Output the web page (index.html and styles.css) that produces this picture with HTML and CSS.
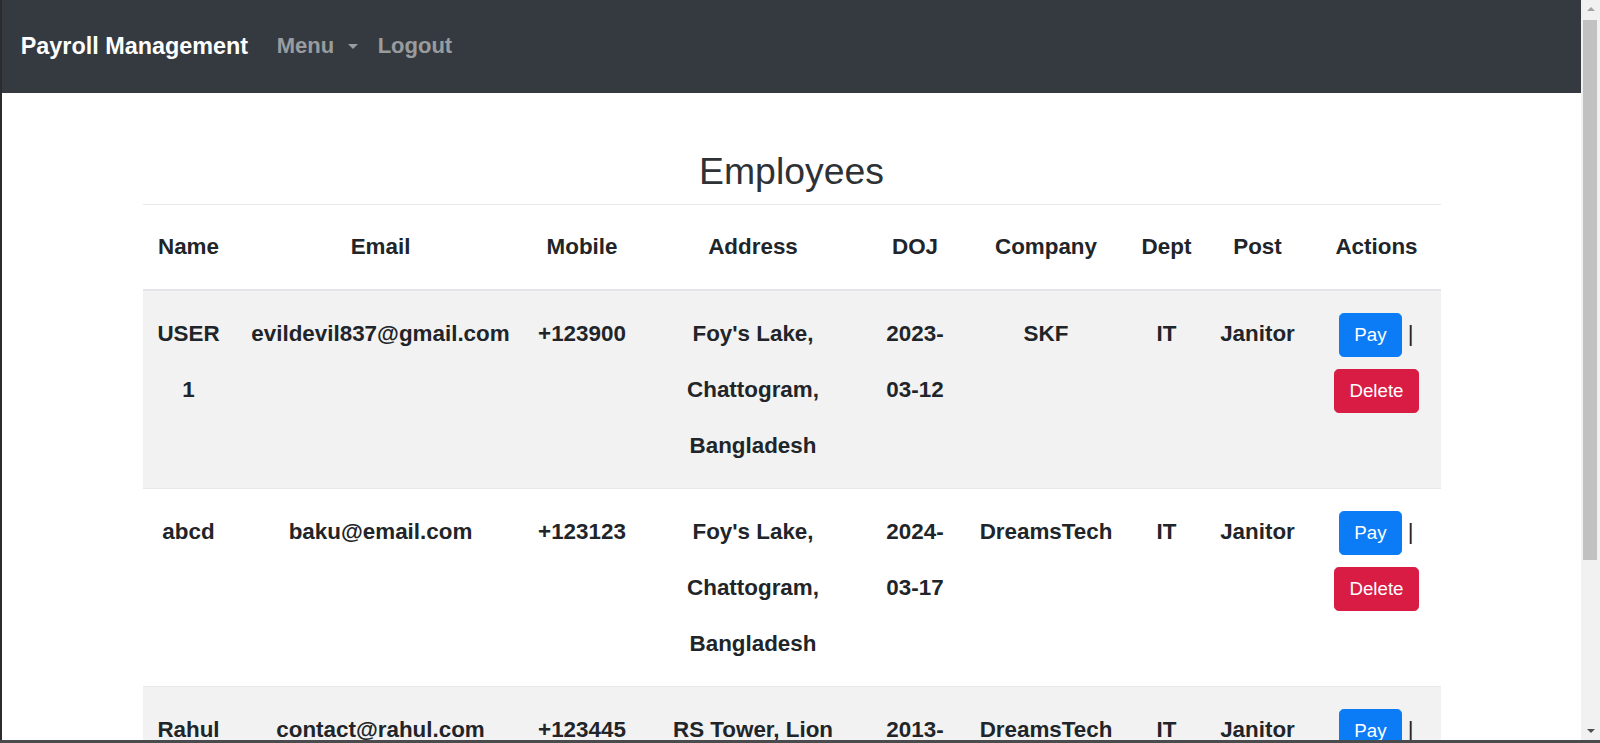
FILE: index.html
```html
<!DOCTYPE html>
<html lang="en">
<head>
<meta charset="utf-8">
<title>Payroll Management</title>
<link rel="stylesheet" href="styles.css">
</head>
<body>
<div class="window">
  <div class="viewport">
    <div class="page">
      <nav class="navbar">
        <a class="brand" href="#">Payroll Management</a>
        <ul class="nav-links">
          <li><a class="nav-link" href="#">Menu<span class="caret"></span></a></li>
          <li class="nav-item-logout"><a class="nav-link" href="#">Logout</a></li>
        </ul>
      </nav>
      <main class="container">
        <h2 class="title">Employees</h2>
        <table class="emp-table">
          <colgroup>
            <col class="c-name"><col class="c-email"><col class="c-mobile"><col class="c-address"><col class="c-doj"><col class="c-company"><col class="c-dept"><col class="c-post"><col class="c-actions">
          </colgroup>
          <thead>
            <tr>
              <th>Name</th><th>Email</th><th>Mobile</th><th>Address</th><th>DOJ</th><th>Company</th><th>Dept</th><th>Post</th><th>Actions</th>
            </tr>
          </thead>
          <tbody>
            <tr>
              <td>USER 1</td>
              <td>evildevil837@gmail.com</td>
              <td class="nowrap">+123900</td>
              <td>Foy's Lake, Chattogram, Bangladesh</td>
              <td>2023-<wbr>03-12</td>
              <td>SKF</td>
              <td>IT</td>
              <td>Janitor</td>
              <td><button class="btn btn-pay">Pay</button> <span class="sep">|</span> <button class="btn btn-delete">Delete</button></td>
            </tr>
            <tr>
              <td>abcd</td>
              <td>baku@email.com</td>
              <td class="nowrap">+123123</td>
              <td>Foy's Lake, Chattogram, Bangladesh</td>
              <td>2024-<wbr>03-17</td>
              <td>DreamsTech</td>
              <td>IT</td>
              <td>Janitor</td>
              <td><button class="btn btn-pay">Pay</button> <span class="sep">|</span> <button class="btn btn-delete">Delete</button></td>
            </tr>
            <tr>
              <td>Rahul</td>
              <td>contact@rahul.com</td>
              <td class="nowrap">+123445</td>
              <td>RS Tower, Lion Street, Chattogram</td>
              <td>2013-<wbr>05-21</td>
              <td>DreamsTech</td>
              <td>IT</td>
              <td>Janitor</td>
              <td><button class="btn btn-pay">Pay</button> <span class="sep">|</span> <button class="btn btn-delete">Delete</button></td>
            </tr>
          </tbody>
        </table>
      </main>
    </div>
    <div class="scrollbar">
      <div class="sb-btn sb-up"><span class="tri-up"></span></div>
      <div class="sb-thumb"></div>
      <div class="sb-track"></div>
      <div class="sb-btn sb-down"><span class="tri-down"></span></div>
    </div>
  </div>
  <div class="frame-bottom"></div>
</div>
</body>
</html>
```

FILE: styles.css
```css
html, body {
  margin: 0;
  padding: 0;
  height: 743px;
  overflow: hidden;
  background: #fff;
  font-family: "Liberation Sans", Arial, sans-serif;
  color: #212529;
}

.window {
  height: 743px;
  display: flex;
  flex-direction: column;
}

.viewport {
  flex: 1;
  min-height: 0;
  display: flex;
  border-left: 2px solid #2c2c2e;
}

.page {
  flex: 1;
  min-width: 0;
  overflow: hidden;
  background: #fff;
}

.frame-bottom {
  height: 3px;
  background: #4a4b4d;
}

/* Navbar */
.navbar {
  height: 93px;
  box-sizing: border-box;
  background: #343a40;
  display: flex;
  align-items: center;
  padding: 0 18.7px 1px;
}

.brand {
  font-size: 23.4px;
  font-weight: 700;
  color: #fff;
  text-decoration: none;
  margin-right: 28.5px;
  white-space: nowrap;
}

.nav-links {
  display: flex;
  align-items: center;
  list-style: none;
  margin: 0;
  padding: 0;
}

.nav-item-logout {
  margin-left: 19.5px;
}

.nav-link {
  display: flex;
  align-items: center;
  font-size: 22px;
  font-weight: 700;
  color: rgba(255, 255, 255, 0.5);
  text-decoration: none;
  white-space: nowrap;
}

.caret {
  width: 0;
  height: 0;
  margin-left: 14px;
  margin-top: 1px;
  border-top: 5px solid rgba(255, 255, 255, 0.5);
  border-left: 5px solid transparent;
  border-right: 5px solid transparent;
}

/* Content */
.container {
  width: 1298px;
  margin: 56px auto 0;
}

.title {
  margin: 0 0 10.4px;
  font-size: 37.4px;
  font-weight: 500;
  line-height: 1.2;
  text-align: center;
  color: #2e3236;
}

.emp-table {
  width: 1298px;
  table-layout: fixed;
  border-collapse: collapse;
  font-size: 22.4px;
  font-weight: 700;
  line-height: 56px;
  text-align: center;
  color: #212529;
}

.c-name { width: 92px; }
.c-email { width: 292px; }
.c-mobile { width: 111px; }
.c-address { width: 231px; }
.c-doj { width: 93px; }
.c-company { width: 169px; }
.c-dept { width: 72px; }
.c-post { width: 110px; }
.c-actions { width: 128px; }

.emp-table th,
.emp-table td {
  padding: 14px 11px;
  vertical-align: top;
  border-top: 1px solid #e6e8ea;
}

.emp-table td {
  padding-top: 14.5px;
  padding-bottom: 14.5px;
}

.emp-table thead th {
  border-bottom: 2px solid #e3e5e8;
}

.emp-table tbody tr:nth-child(odd) {
  background: #f2f2f2;
}

.nowrap {
  white-space: nowrap;
}

.sep {
  font-weight: 400;
}

.btn {
  display: inline-block;
  vertical-align: middle;
  font-family: "Liberation Sans", Arial, sans-serif;
  font-size: 18.7px;
  font-weight: 400;
  line-height: 1.5;
  padding: 7px 14px;
  border: 1px solid transparent;
  border-radius: 4.7px;
  color: #fff;
  cursor: pointer;
}

.btn-pay {
  background: #0b7cf5;
  border-color: #0b7cf5;
}

.btn-delete {
  background: #d81c44;
  border-color: #d81c44;
}

/* Fake scrollbar */
.scrollbar {
  width: 19px;
  display: flex;
  flex-direction: column;
  background: #f1f1f1;
}

.sb-btn {
  height: 18px;
  display: flex;
  align-items: center;
  justify-content: center;
  background: #f1f1f1;
}

.sb-thumb {
  height: 540px;
  margin: 2px 3px 0 2px;
  background: #c1c1c1;
}

.sb-track {
  flex: 1;
}

.tri-up {
  width: 0;
  height: 0;
  border-bottom: 4px solid #a3a3a3;
  border-left: 4px solid transparent;
  border-right: 4px solid transparent;
}

.tri-down {
  width: 0;
  height: 0;
  border-top: 4px solid #505050;
  border-left: 4px solid transparent;
  border-right: 4px solid transparent;
}
```
